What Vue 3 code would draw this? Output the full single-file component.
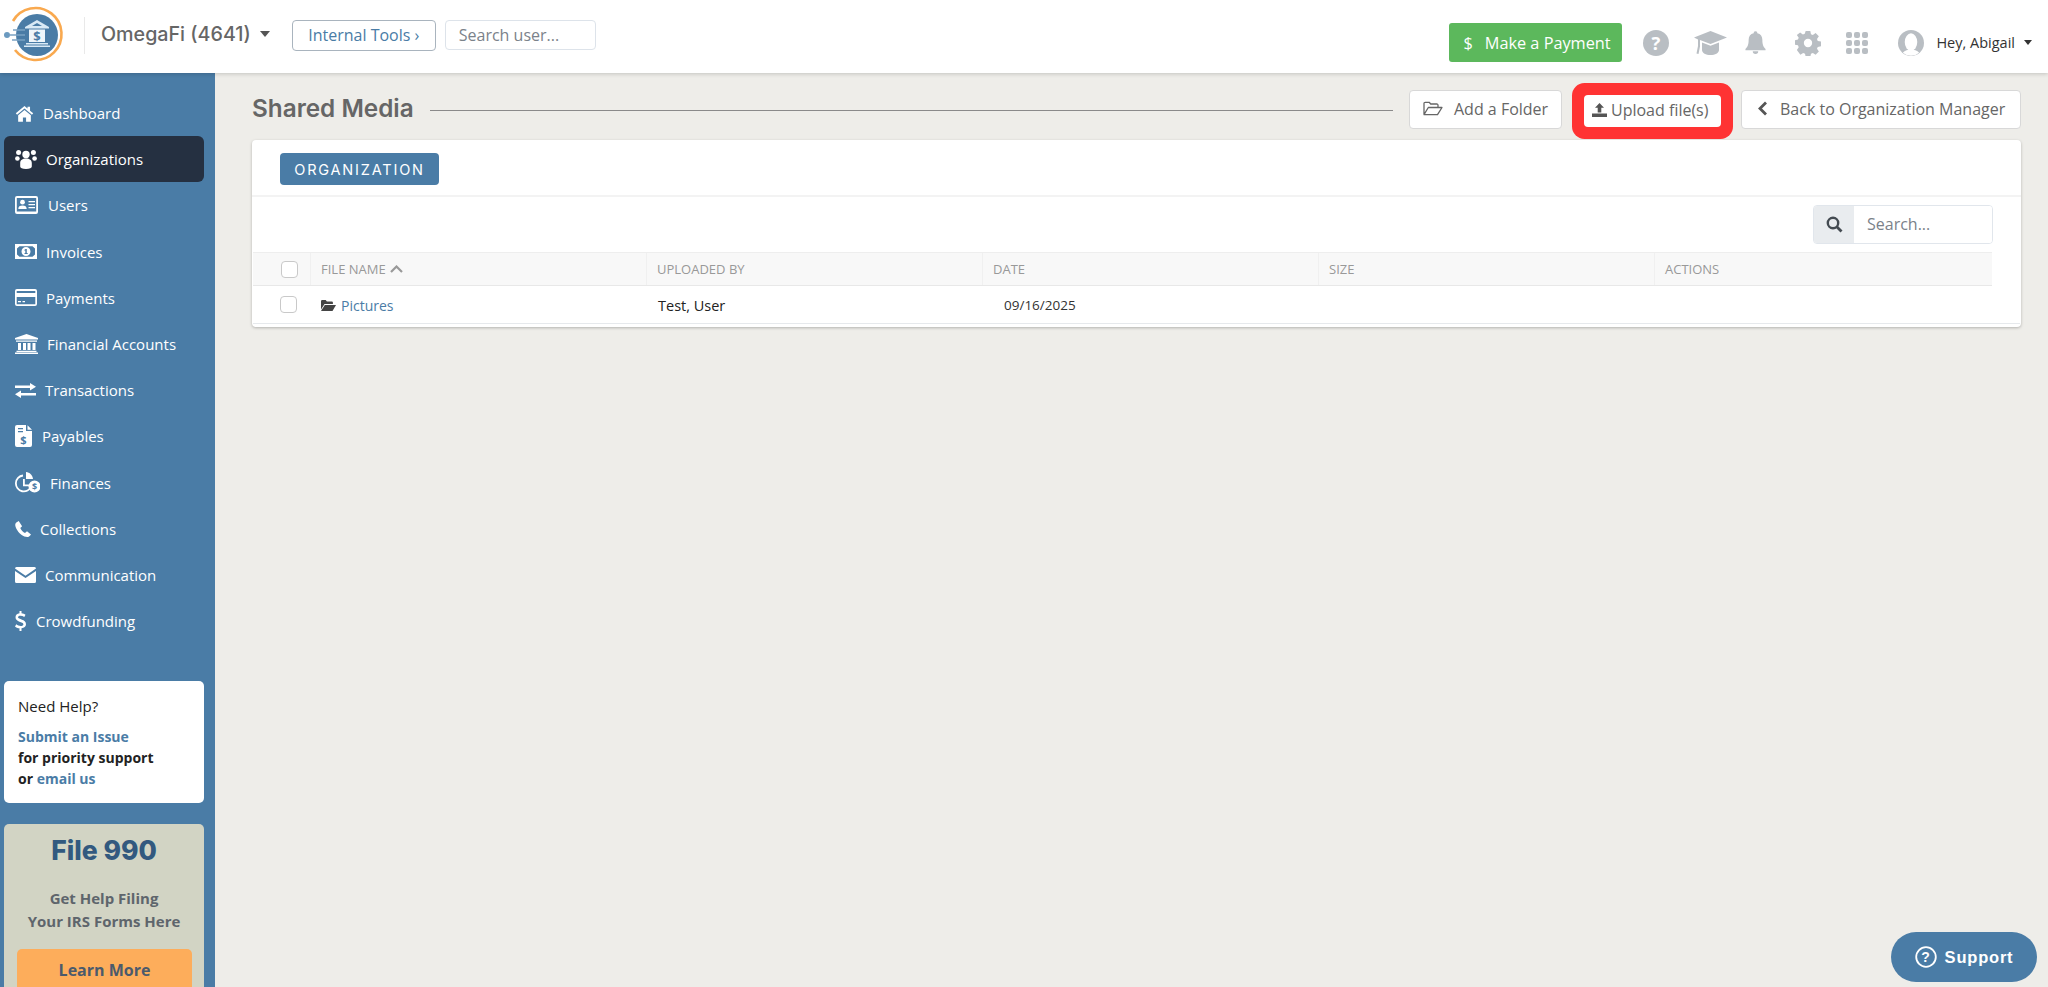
<script setup>
const nav = [
  { label: 'Dashboard', w: 19, h: 17, vb: '0 0 24 21', gap: 9, shape: '<path d="M12 1 1 10.2l1.6 1.8L12 4.200l9.400 7.800 1.600-1.800-4-3.300V2h-3.200v2.200z"/><path d="M12 6.200 4 12.800V21h6v-5.500h4V21h6v-8.200z"/>' },
  { label: 'Organizations', active: true, w: 22, h: 20, vb: '0 0 22 20', gap: 9, shape: '<circle cx="11" cy="5.500" r="3.700"/><circle cx="3.600" cy="3.600" r="2.500"/><circle cx="18.400" cy="3.600" r="2.500"/><circle cx="2.400" cy="9.500" r="2.300"/><circle cx="19.600" cy="9.500" r="2.300"/><path d="M5.200 14c0-3 2.300-4.500 5.800-4.500s5.800 1.500 5.800 4.500v3.500c0 1.600-2 2.500-5.800 2.500s-5.800-.9-5.800-2.500z"/>' },
  { label: 'Users', w: 23, h: 18, vb: '0 0 23 18', gap: 10, shape: '<path fill-rule="evenodd" d="M2 0h19a2 2 0 0 1 2 2v14a2 2 0 0 1-2 2H2a2 2 0 0 1-2-2V2a2 2 0 0 1 2-2zm-.2 2v13.500h19.400V2z"/><circle cx="7.500" cy="6.200" r="2.400"/><path d="M3.300 13c0-2.500 1.500-3.600 4.200-3.600s4.200 1.100 4.200 3.600zM13.500 5H20v1.300h-6.500zM13.500 8H20v1.300h-6.500zM13.500 11H20v1.300h-6.500z"/>' },
  { label: 'Invoices', w: 22, h: 15, vb: '0 0 22 15', gap: 9, shape: '<path fill-rule="evenodd" d="M0 0h22v15H0zm4.500 2.200L2 4.500v6l2.500 2.300h13l2.500-2.300v-6l-2.500-2.300z"/><path fill-rule="evenodd" d="M11 3a4.500 4.500 0 1 1 0 9 4.500 4.500 0 0 1 0-9zm-.4 2-1.400 1 .6.800.5-.4v2.700H9.500v.9h3.200v-.9h-.9V5z"/>' },
  { label: 'Payments', w: 22, h: 17, vb: '0 0 22 17', gap: 9, shape: '<path fill-rule="evenodd" d="M2 0h18a2 2 0 0 1 2 2v13a2 2 0 0 1-2 2H2a2 2 0 0 1-2-2V2a2 2 0 0 1 2-2zm-.3 2v2h18.600V2zm0 6v7.300h18.600V8z"/><path d="M3 12h3v1.300H3zM7.500 12H10v1.300H7.500z"/>' },
  { label: 'Financial Accounts', w: 23, h: 20, vb: '0 0 23 20', gap: 9, shape: '<path d="M11.500 0 23 4v1.500H0V4zM1 6.500h21v1.300H1zM3 9h3v7H3zM8 9h3v7H8zM12.500 9h3v7h-3zM17.500 9h3v7h-3zM1.500 16.800h20V18h-20zM0 18.600h23V20H0z"/>' },
  { label: 'Transactions', w: 21, h: 15, vb: '0 0 21 15', gap: 9, shape: '<path d="M15 0l6 3.700-6 3.800V5H0V2.500h15zM6 7.500V10h15v2.500H6V15l-6-3.700z"/>' },
  { label: 'Payables', w: 17, h: 22, vb: '0 0 17 22', gap: 10, shape: '<path d="M2 0h9v6h6v14a2 2 0 0 1-2 2H2a2 2 0 0 1-2-2V2a2 2 0 0 1 2-2zm10.500.3L17 4.700h-4.500z"/><path fill="#4a7ca6" d="M3 3h5v1.200H3zM3 6h5v1.200H3z"/><text x="8.500" y="18.500" text-anchor="middle" font-size="11" font-weight="700" font-family="Open Sans" fill="#4a7ca6">$</text>' },
  { label: 'Finances', w: 25, h: 21, vb: '0 0 25 21', gap: 10, shape: '<path fill="none" stroke="#fff" stroke-width="1.800" d="M8 3.500a8 8 0 1 0 8.300 11"/><path d="M8 7h1.800v5.500H15v1.800H8z"/><path d="M11 0c3.700.3 6.700 3.300 7 7h-7z"/><circle cx="19.500" cy="14.500" r="6"/><text x="19.500" y="18" text-anchor="middle" font-size="9" font-weight="700" font-family="Open Sans" fill="#4a7ca6">$</text>' },
  { label: 'Collections', w: 16, h: 16, vb: '0 0 16 16', gap: 9, shape: '<path d="M3.700 0 1 1.700C-.3 3 0 5.700 2.300 9.300c2.500 3.800 6 6.700 10 6.700 1.200 0 2.200-.5 3.700-2.600l-4-3.200-2 1.800c-1.800-.8-4-3.100-4.700-5l1.800-1.700z"/>' },
  { label: 'Communication', w: 21, h: 16, vb: '0 0 21 16', gap: 9, shape: '<path d="M1.500 0h18A1.500 1.500 0 0 1 21 1.500L10.500 8.700 0 1.500A1.500 1.500 0 0 1 1.500 0z"/><path d="M0 4v10.500A1.500 1.500 0 0 0 1.500 16h18a1.500 1.500 0 0 0 1.500-1.500V4l-10.500 7z"/>' },
  { label: 'Crowdfunding', w: 11, h: 20, vb: '0 0 11 20', gap: 10, shape: '<path d="M4.500 0h2v2.300c1.600.2 3 .8 4 1.500L9.300 6C8 5.200 6.800 4.700 5.400 4.700c-1.500 0-2.400.6-2.400 1.500 0 2.300 8 1.700 8 7 0 2.200-1.700 3.700-4.500 4.100V20h-2v-2.700c-1.800-.2-3.400-.9-4.500-1.900l1.300-2.100c1.300 1 2.900 1.700 4.400 1.700 1.700 0 2.700-.7 2.700-1.800C8.400 10.700.5 11.300.5 6.300.5 4.200 2 2.700 4.500 2.300z"/>' },
]
const columns = ['Uploaded by', 'Date', 'Size', 'Actions']
</script>

<template>
  <div class="app">
    <header class="topbar">
      <svg class="logo" width="72" height="73" viewBox="0 0 72 73" aria-hidden="true">
        <path d="M13 21A26 26 0 1 1 15 50" fill="none" stroke="#f9a94f" stroke-width="2.600" />
        <circle cx="37" cy="35" r="21" fill="#4a7ca6" />
        <circle cx="7" cy="35" r="3" fill="#6b9ac0" />
        <path d="M9 35h16M13 30h12M12 40h13" stroke="#7ba3c4" stroke-width="1.300" />
        <path d="M37 20l12 7v1.500H25V27z" fill="#d9e9f5" />
        <path d="M37 23l5 3h-10z" fill="#4a7ca6" />
        <path d="M29 29.500h16V42H29z" fill="#eef5fa" />
        <path d="M26 43h22v1.500H26zM24 45.500h26V47H24z" fill="#d9e9f5" />
        <text x="37" y="41" text-anchor="middle" font-size="13" font-weight="700" font-family="Open Sans" fill="#4a7ca6">$</text>
      </svg>
      <span class="logo-sep"></span>
      <span class="org">OmegaFi (4641)</span>
      <span class="caret org-caret"></span>
      <a class="tools">Internal Tools ›</a>
      <input class="user-search" placeholder="Search user..." />

      <div class="top-right">
        <button class="pay"><span class="pay-sign">$</span>Make a Payment</button>
        <svg class="ti help-i" width="26" height="26" viewBox="0 0 28 28"><circle cx="14" cy="14" r="14" fill="#b9bec3" /><text x="14" y="21" text-anchor="middle" font-size="20" font-weight="700" font-family="Open Sans" fill="#fff">?</text></svg>
        <svg class="ti cap-i" width="33" height="26" viewBox="0 0 33 26"><path d="M16.500 1 33 7.500 16.500 14 6 10v6.500L4.500 24l-2-.5L4 16V9.500L0 7.500z" fill="#b9bec3" /><path d="M8 12.500l8.500 3.300 8.500-3.300V20c0 3-4 5-8.500 5S8 23 8 20z" fill="#b9bec3" /></svg>
        <svg class="ti bell-i" width="21" height="26" viewBox="0 0 23 26"><path d="M11.500 0a2 2 0 0 1 2 2.300c3.700.7 5.500 3.600 5.500 7.200 0 6 1.500 8 3.500 10v1.500H.5v-1.500c2-2 3.500-4 3.500-10 0-3.600 1.800-6.500 5.500-7.200a2 2 0 0 1 2-2.300zM8.500 22h6a3 3 0 0 1-6 0z" fill="#b9bec3" /></svg>
        <svg class="ti gear-i" width="26" height="26" viewBox="-1 0 28 26"><path fill-rule="evenodd" fill="#b9bec3" d="M10.500 0h5l.7 3.500 2 .8 3-2 3.500 3.500-2 3 .8 2 3.500.7v5l-3.500.7-.8 2 2 3-3.500 3.500-3-2-2 .8-.7 3.500h-5l-.7-3.500-2-.8-3 2L1 20.500l2-3-.8-2L-1 15v-5l3.200-.7.8-2-2-3L4.500 1.800l3 2 2-.8zM13 8.500a4.500 4.500 0 1 0 0 9 4.500 4.500 0 0 0 0-9z" /></svg>
        <span class="grid-i"><i v-for="n in 9" :key="n"></i></span>
        <svg class="ti avatar-i" width="26" height="26" viewBox="0 0 27 27"><circle cx="13.500" cy="13.500" r="13.500" fill="#b9bec3" /><ellipse cx="13.500" cy="12.500" rx="6.500" ry="9" fill="#fff" /><path d="M5 23.500c2-2.500 5.500-3 8.500-3s6.500.5 8.500 3a13 13 0 0 1-17 0z" fill="#fff" /></svg>
        <span class="hey">Hey, Abigail</span>
        <span class="caret hey-caret"></span>
      </div>
    </header>

    <div class="body">
      <aside class="sidebar">
        <nav class="nav">
          <a v-for="item in nav" :key="item.label" class="nav-item" :class="{ active: item.active }">
            <svg class="nav-icon" :width="item.w" :height="item.h" :viewBox="item.vb" :style="{ marginRight: item.gap + 'px' }" v-html="item.shape"></svg>
            <span>{{ item.label }}</span>
          </a>
        </nav>
        <div class="help">
          <div class="help-title">Need Help?</div>
          <div class="help-lines">
            <a>Submit an Issue</a><br />
            for priority support<br />
            or <a>email us</a>
          </div>
        </div>
        <div class="promo">
          <div class="promo-title">File 990</div>
          <div class="promo-text">Get Help Filing<br />Your IRS Forms Here</div>
          <button class="promo-btn">Learn More</button>
        </div>
      </aside>

      <main class="main">
        <div class="title-row">
          <h1>Shared Media</h1>
          <span class="title-line"></span>
          <button class="act add">
            <svg width="20" height="15" viewBox="0 0 20 15"><path d="M1 13V2.500A1.200 1.200 0 0 1 2.200 1.300h4l1.500 1.700h6.100A1.200 1.200 0 0 1 15 4.200V6M1 13.700h13.500L19 6.500H5.300z" fill="none" stroke="#666" stroke-width="1.300" stroke-linejoin="round" /></svg>
            Add a Folder
          </button>
          <button class="act upload">
            <svg width="15" height="14" viewBox="0 0 15 14"><path d="M7.500 0l4.500 4.800H9.300V9.500H5.700V4.800H3zM0 10.500h15V14H0z" fill="#555" /></svg>
            Upload file(s)
          </button>
          <button class="act back">
            <svg width="11" height="15" viewBox="0 0 11 15"><path d="M9 1.500 3 7.500l6 6" fill="none" stroke="#555" stroke-width="2.800" /></svg>
            Back to Organization Manager
          </button>
        </div>

        <section class="card">
          <div class="tabs"><button class="tab">ORGANIZATION</button></div>
          <div class="toolbar">
            <div class="search-box">
              <span class="addon">
                <svg width="17" height="17" viewBox="0 0 17 17"><circle cx="7" cy="7" r="5.200" fill="none" stroke="#444b52" stroke-width="2.400" /><path d="M10.800 10.800 15.500 15.500" stroke="#444b52" stroke-width="2.800" /></svg>
              </span>
              <input placeholder="Search..." />
            </div>
          </div>
          <div class="table">
            <div class="thead">
              <div class="cell check-cell"><span class="check"></span></div>
              <div class="cell th">
                FILE NAME
                <svg class="sort" width="13" height="8" viewBox="0 0 13 8"><path d="M1 7l5.500-5.500L12 7" fill="none" stroke="#999" stroke-width="2.200" /></svg>
              </div>
              <div v-for="c in columns" :key="c" class="cell th">{{ c.toUpperCase() }}</div>
            </div>
            <div class="trow">
              <div class="cell check-cell row-check"><span class="check"></span></div>
              <div class="cell file">
                <svg width="15" height="11" viewBox="0 0 15 11"><path d="M0 1.200A1.200 1.200 0 0 1 1.200 0h3.500l1.200 1.500h5a1 1 0 0 1 1 1V4H3.500L0 9.500z" fill="#444" /><path d="M3.800 5H15l-3.500 6H0z" fill="#444" /></svg>
                <a>Pictures</a>
              </div>
              <div class="cell user">Test, User</div>
              <div class="cell date">09/16/2025</div>
              <div class="cell"></div>
              <div class="cell"></div>
            </div>
          </div>
        </section>
      </main>
    </div>

    <button class="support">
      <svg width="22" height="22" viewBox="0 0 22 22"><circle cx="11" cy="11" r="9.800" fill="none" stroke="#fff" stroke-width="1.800" /><text x="11" y="16" text-anchor="middle" font-size="14" font-weight="700" font-family="Liberation Sans" fill="#fff">?</text></svg>
      Support
    </button>
  </div>
</template>

<style>
html, body { margin: 0; overflow: hidden; }
</style>

<style scoped>
.app {
  position: relative;
  height: 987px;
  overflow: hidden;
  display: flex;
  flex-direction: column;
  background: #eeede9;
  font-family: "Open Sans", "Noto Sans", sans-serif;
  color: #666;
}
button, input { font-family: inherit; }

.topbar {
  height: 73px;
  flex: none;
  display: flex;
  align-items: center;
  background: #fff;
  box-shadow: 0 1px 4px rgba(0, 0, 0, 0.18);
  position: relative;
  z-index: 2;
}
.logo { flex: none; }
.logo-sep { width: 1px; height: 37px; background: #e9e9e9; margin: 0 16px 2px 12px; }
.org { font-family: Inter, sans-serif; font-weight: 500; font-size: 19.700px; color: #666; margin-bottom: 5px; }
.caret { display: inline-block; width: 0; height: 0; border-left: 5px solid transparent; border-right: 5px solid transparent; border-top: 6px solid #555; }
.org-caret { margin: 0 22px 6px 9px; }
.tools {
  width: 144px; height: 31px; box-sizing: border-box;
  border: 1px solid #a9b4be; border-radius: 4px;
  display: flex; align-items: center; justify-content: center;
  color: #4a7ca6; font-size: 16px; margin-bottom: 3px;
}
.user-search {
  width: 151px; height: 30px; box-sizing: border-box; margin: 0 0 4px 9px;
  border: 1px solid #dde3ea; border-radius: 4px; padding: 0 13px;
  font-size: 16px; outline: none;
}
.user-search::placeholder, .search-box input::placeholder { color: #7b828a; opacity: 1; }
.top-right { margin-left: auto; display: flex; align-items: center; height: 100%; box-sizing: border-box; padding: 12px 15px 0 0; }
.pay {
  width: 173px; height: 39px; border: 0; border-radius: 3px;
  background: #5cb85c; color: #fff; font-size: 16.300px;
  display: flex; align-items: center; padding: 0 0 0 14px;
}
.pay-sign { margin-right: 12px; }
.ti { flex: none; }
.help-i { margin-left: 21px; }
.cap-i { margin-left: 25px; }
.bell-i { margin-left: 18px; }
.gear-i { margin-left: 29px; }
.grid-i { margin-left: 25px; display: grid; grid-template-columns: repeat(3, 6px); gap: 2px; }
.grid-i i { width: 6px; height: 6px; border-radius: 2px; background: #b9bec3; }
.avatar-i { margin-left: 30px; }
.hey { margin-left: 12px; font-size: 14.500px; color: #333; white-space: nowrap; }
.hey-caret { margin: 0 1px 0 9px; border-left-width: 4px; border-right-width: 4px; border-top-width: 5px; border-top-color: #333; }

.body { flex: 1; display: flex; min-height: 0; }
.sidebar { width: 215px; flex: none; background: #4a7ca6; padding-top: 17px; overflow: hidden; box-sizing: border-box; }
.nav { display: flex; flex-direction: column; }
.nav-item {
  height: 46.200px; box-sizing: border-box; margin: 0 11px 0 4px; padding-left: 11px;
  display: flex; align-items: center; color: #fff; font-size: 15px; border-radius: 6px;
}
.nav-item.active { background: #253041; }
.nav-icon { flex: none; fill: #fff; }
.help {
  margin: 37px 11px 0 4px; height: 122px; box-sizing: border-box; padding: 13px 14px;
  background: #fff; border-radius: 5px;
}
.help-title { font-size: 15px; color: #222; line-height: 24px; }
.help-lines { margin-top: 8px; font-size: 14px; font-weight: 700; line-height: 21px; color: #222; }
.help-lines a { color: #4a7ca6; }
.promo {
  margin: 21px 11px 0 4px; height: 200px; box-sizing: border-box; padding-top: 10px;
  background: #d2d4c4; border-radius: 5px 5px 0 0; text-align: center;
}
.promo-title { font-family: Inter, sans-serif; font-weight: 800; font-size: 26.500px; line-height: 32px; color: #32597f; }
.promo-text { margin-top: 21px; font-size: 15px; font-weight: 700; line-height: 23px; color: #5e656c; }
.promo-btn {
  display: block; margin: 16px 13px 0; width: 175px; height: 60px; padding: 0 0 18px;
  border: 0; border-radius: 5px; background: #fdad5b; color: #4b5a6c;
  font-size: 16px; font-weight: 700;
}

.main { flex: 1; min-width: 0; padding: 17px 27px 0 37px; }
.title-row { display: flex; align-items: center; height: 39px; }
h1 { margin: 0 0 3px; font-family: Inter, sans-serif; font-weight: 600; font-size: 24.300px; color: #666; }
.title-line { flex: 1; height: 1px; background: #8a8a8a; margin: 2px 16px 0 16px; }
.act {
  height: 39px; box-sizing: border-box; background: #fff; border: 1px solid #d8d8d8; border-radius: 4px;
  display: flex; align-items: center; color: #666; font-size: 16px; white-space: nowrap; padding: 0 0 2px;
}
.add { width: 153px; padding-left: 13px; gap: 11px; }
.upload { width: 137px; height: 32px; margin: 3px 0 0 22px; padding-left: 8px; gap: 4px; border: 0; border-radius: 4px; box-shadow: 0 0 0 12px #ff3333; }
.back { width: 280px; margin-left: 20px; padding-left: 15px; gap: 12px; }

.card {
  margin-top: 11px; height: 187px; background: #fff; border-radius: 4px;
  box-shadow: 0 1px 3px rgba(0, 0, 0, 0.25); display: flex; flex-direction: column;
}
.tabs { height: 57px; box-sizing: border-box; padding: 13px 0 0 28px; border-bottom: 2px solid #f3f3f3; flex: none; }
.tab {
  width: 159px; height: 32px; border: 0; border-radius: 4px; background: #4a7ca6; color: #fff;
  font-family: Inter, sans-serif; font-size: 14.500px; font-weight: 400; letter-spacing: 1.800px; padding: 0;
}
.toolbar { height: 55px; box-sizing: border-box; display: flex; justify-content: flex-end; padding: 8px 28px 0 0; flex: none; }
.search-box { display: flex; width: 180px; height: 39px; box-sizing: border-box; border: 1px solid #e1e6ec; border-radius: 4px; overflow: hidden; }
.addon { width: 40px; flex: none; background: #e9ecef; display: flex; align-items: center; justify-content: center; }
.search-box input { flex: 1; min-width: 0; border: 0; outline: none; padding: 0 13px 2px; font-size: 16px; }
.table { margin: 0 29px 0 1px; }
.thead, .trow { display: grid; grid-template-columns: 57px repeat(4, 336px) 337px; }
.thead { height: 34px; background: #f8f8f8; border-top: 1px solid #eeeeee; border-bottom: 1px solid #e8e8e8; box-sizing: border-box; }
.trow { height: 38px; box-sizing: border-box; margin-right: -28px; grid-template-columns: 57px repeat(4, 336px) 1fr; border-bottom: 1px solid #e6e9ec; }
.cell { display: flex; align-items: center; padding-left: 11px; min-width: 0; }
.th { font-size: 13px; color: #999; border-left: 1px solid #f0f0f0; white-space: nowrap; padding-left: 10px; }
.sort { margin-left: 4px; }
.check-cell { padding-left: 28px; }
.row-check { padding-left: 27px; padding-bottom: 1px; }
.check { display: block; width: 17px; height: 17px; box-sizing: border-box; border: 1px solid #c9c9c9; border-radius: 4px; background: #fff; }
.file { gap: 5px; font-size: 14px; padding-top: 1px; }
.file a { color: #4a7ca6; }
.user { font-size: 14.500px; color: #222; padding: 2px 0 0 12px; }
.date { font-size: 13.500px; color: #333; padding: 1px 0 0 22px; }

.support {
  position: absolute; left: 1891px; top: 932px; width: 146px; height: 50px;
  border: 0; border-radius: 25px; background: #4a7ca6; color: #fff;
  font-family: "Liberation Sans", Arial, sans-serif; font-size: 16.500px; font-weight: 700; letter-spacing: 0.8px;
  display: flex; align-items: center; justify-content: center; gap: 8px; padding: 0;
}
</style>
